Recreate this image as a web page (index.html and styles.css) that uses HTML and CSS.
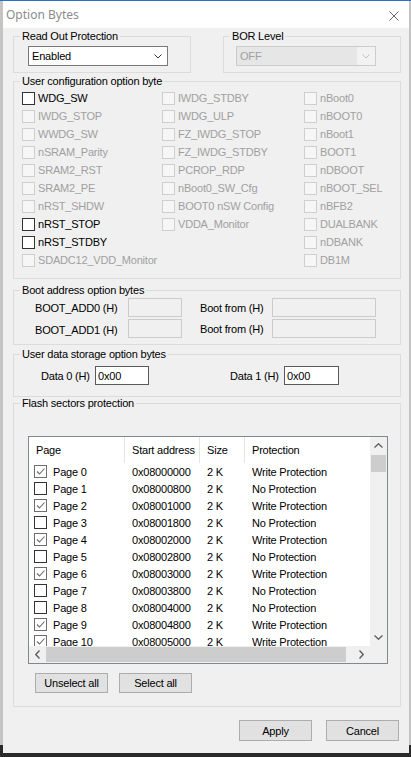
FILE: index.html
```html
<!DOCTYPE html>
<html lang="en">
  <head>
    <meta charset="UTF-8" />
    <meta name="viewport" content="width=device-width, initial-scale=1.0" />
    <title>Option Bytes</title>
    <link rel="stylesheet" href="styles.css">
  </head>
  <body>
    <div class="desktop">
      <div class="window">
        <div class="titlebar">
          <span class="title">Option Bytes</span>
          <svg class="close" width="10" height="10" viewBox="0 0 10 10">
            <path d="M0.5 0.5 L9.5 9.5 M9.5 0.5 L0.5 9.5" />
          </svg>
        </div>

        <div class="dialog">
          <div class="top-row">
            <fieldset class="group group-top">
              <legend>Read Out Protection</legend>
              <div class="group-body rop-body">
                <div class="combo">
                  <span class="combo-text">Enabled</span>
                  <span class="combo-btn">
                    <svg width="8" height="5" viewBox="0 0 8 5"><path d="M0.5 0.5 L4 4 L7.5 0.5" /></svg>
                  </span>
                </div>
              </div>
            </fieldset>
            <fieldset class="group group-top">
              <legend>BOR Level</legend>
              <div class="group-body bor-body">
                <div class="combo combo-off">
                  <span class="combo-text">OFF</span>
                  <span class="combo-btn">
                    <svg width="8" height="5" viewBox="0 0 8 5"><path d="M0.5 0.5 L4 4 L7.5 0.5" /></svg>
                  </span>
                </div>
              </div>
            </fieldset>
          </div>

          <fieldset class="group group-user">
            <legend>User configuration option byte</legend>
            <div class="group-body opt-grid">
              <div class="opt-col">
                <div class="opt"><span class="box"></span>WDG_SW</div>
                <div class="opt off"><span class="box"></span>IWDG_STOP</div>
                <div class="opt off"><span class="box"></span>WWDG_SW</div>
                <div class="opt off"><span class="box"></span>nSRAM_Parity</div>
                <div class="opt off"><span class="box"></span>SRAM2_RST</div>
                <div class="opt off"><span class="box"></span>SRAM2_PE</div>
                <div class="opt off"><span class="box"></span>nRST_SHDW</div>
                <div class="opt"><span class="box"></span>nRST_STOP</div>
                <div class="opt"><span class="box"></span>nRST_STDBY</div>
                <div class="opt off"><span class="box"></span>SDADC12_VDD_Monitor</div>
              </div>
              <div class="opt-col">
                <div class="opt off"><span class="box"></span>IWDG_STDBY</div>
                <div class="opt off"><span class="box"></span>IWDG_ULP</div>
                <div class="opt off"><span class="box"></span>FZ_IWDG_STOP</div>
                <div class="opt off"><span class="box"></span>FZ_IWDG_STDBY</div>
                <div class="opt off"><span class="box"></span>PCROP_RDP</div>
                <div class="opt off"><span class="box"></span>nBoot0_SW_Cfg</div>
                <div class="opt off"><span class="box"></span>BOOT0 nSW Config</div>
                <div class="opt off"><span class="box"></span>VDDA_Monitor</div>
              </div>
              <div class="opt-col">
                <div class="opt off"><span class="box"></span>nBoot0</div>
                <div class="opt off"><span class="box"></span>nBOOT0</div>
                <div class="opt off"><span class="box"></span>nBoot1</div>
                <div class="opt off"><span class="box"></span>BOOT1</div>
                <div class="opt off"><span class="box"></span>nDBOOT</div>
                <div class="opt off"><span class="box"></span>nBOOT_SEL</div>
                <div class="opt off"><span class="box"></span>nBFB2</div>
                <div class="opt off"><span class="box"></span>DUALBANK</div>
                <div class="opt off"><span class="box"></span>nDBANK</div>
                <div class="opt off"><span class="box"></span>DB1M</div>
              </div>
            </div>
          </fieldset>

          <fieldset class="group group-boot">
            <legend>Boot address option bytes</legend>
            <div class="group-body boot-grid">
              <span class="boot-label">BOOT_ADD0 (H)</span>
              <span class="field field-off"></span>
              <span class="boot-label from">Boot from (H)</span>
              <span class="field field-off"></span>
              <span class="boot-label second">BOOT_ADD1 (H)</span>
              <span class="field field-off"></span>
              <span class="boot-label from">Boot from (H)</span>
              <span class="field field-off"></span>
            </div>
          </fieldset>

          <fieldset class="group group-data">
            <legend>User data storage option bytes</legend>
            <div class="group-body data-row">
              <span class="data-label">Data 0 (H)</span>
              <span class="field">0x00</span>
              <span class="data-label data-second">Data 1 (H)</span>
              <span class="field field-wide">0x00</span>
            </div>
          </fieldset>

          <fieldset class="group group-flash">
            <legend>Flash sectors protection</legend>
            <div class="group-body flash-body">
              <div class="listview">
                <div class="list-main">
                  <div class="list-head">
                    <span>Page</span>
                    <span>Start address</span>
                    <span>Size</span>
                    <span>Protection</span>
                  </div>
                  <div class="list-row"><span class="page"><span class="box checked"><svg viewBox="0 0 11 11"><path d="M2 5.5 L4.5 8 L9.5 2.5" /></svg></span>Page 0</span><span>0x08000000</span><span>2 K</span><span>Write Protection</span></div>
                  <div class="list-row"><span class="page"><span class="box"></span>Page 1</span><span>0x08000800</span><span>2 K</span><span>No Protection</span></div>
                  <div class="list-row"><span class="page"><span class="box checked"><svg viewBox="0 0 11 11"><path d="M2 5.5 L4.5 8 L9.5 2.5" /></svg></span>Page 2</span><span>0x08001000</span><span>2 K</span><span>Write Protection</span></div>
                  <div class="list-row"><span class="page"><span class="box"></span>Page 3</span><span>0x08001800</span><span>2 K</span><span>No Protection</span></div>
                  <div class="list-row"><span class="page"><span class="box checked"><svg viewBox="0 0 11 11"><path d="M2 5.5 L4.5 8 L9.5 2.5" /></svg></span>Page 4</span><span>0x08002000</span><span>2 K</span><span>Write Protection</span></div>
                  <div class="list-row"><span class="page"><span class="box"></span>Page 5</span><span>0x08002800</span><span>2 K</span><span>No Protection</span></div>
                  <div class="list-row"><span class="page"><span class="box checked"><svg viewBox="0 0 11 11"><path d="M2 5.5 L4.5 8 L9.5 2.5" /></svg></span>Page 6</span><span>0x08003000</span><span>2 K</span><span>Write Protection</span></div>
                  <div class="list-row"><span class="page"><span class="box"></span>Page 7</span><span>0x08003800</span><span>2 K</span><span>No Protection</span></div>
                  <div class="list-row"><span class="page"><span class="box"></span>Page 8</span><span>0x08004000</span><span>2 K</span><span>No Protection</span></div>
                  <div class="list-row"><span class="page"><span class="box checked"><svg viewBox="0 0 11 11"><path d="M2 5.5 L4.5 8 L9.5 2.5" /></svg></span>Page 9</span><span>0x08004800</span><span>2 K</span><span>Write Protection</span></div>
                  <div class="list-row"><span class="page"><span class="box checked"><svg viewBox="0 0 11 11"><path d="M2 5.5 L4.5 8 L9.5 2.5" /></svg></span>Page 10</span><span>0x08005000</span><span>2 K</span><span>Write Protection</span></div>
                </div>
                <div class="vscroll">
                  <span class="arrow"><svg width="9" height="5" viewBox="0 0 9 5"><path d="M0.5 4.5 L4.5 0.8 L8.5 4.5" /></svg></span>
                  <span class="vthumb"></span>
                  <span class="track"></span>
                  <span class="arrow"><svg width="9" height="5" viewBox="0 0 9 5"><path d="M0.5 0.5 L4.5 4.2 L8.5 0.5" /></svg></span>
                </div>
                <div class="hscroll">
                  <span class="arrow"><svg width="5" height="9" viewBox="0 0 5 9"><path d="M4.5 0.5 L0.8 4.5 L4.5 8.5" /></svg></span>
                  <span class="hthumb"></span>
                  <span class="track"></span>
                  <span class="arrow"><svg width="5" height="9" viewBox="0 0 5 9"><path d="M0.5 0.5 L4.2 4.5 L0.5 8.5" /></svg></span>
                </div>
                <div class="corner"></div>
              </div>
              <div class="list-buttons">
                <button class="btn">Unselect all</button>
                <button class="btn">Select all</button>
              </div>
            </div>
          </fieldset>

          <div class="footer">
            <button class="btn btn-big">Apply</button>
            <button class="btn btn-big">Cancel</button>
          </div>
        </div>
      </div>
    </div>
  </body>
</html>
```
FILE: styles.css
```css
* {
  box-sizing: border-box;
}

body {
  margin: 0;
  background: linear-gradient(#c4c4c4 0, #c4c4c4 745px, #2b2b2b 745px);
  font-family: "Liberation Sans", Arial, sans-serif;
  font-size: 11px;
  letter-spacing: -0.2px;
  color: #000;
}

.desktop {
  height: 757px;
  border-top: 1px solid #2c6fc7;
}

.window {
  margin-left: 3px;
  width: 406px;
  height: 752px;
  background: #f0f0f0;
  display: flex;
  flex-direction: column;
}

.titlebar {
  height: 27px;
  flex: none;
  background: #fff;
  display: flex;
  align-items: center;
  justify-content: space-between;
  padding: 0 10px 0 3px;
}

.title {
  font-family: "Noto Sans", "Open Sans", sans-serif;
  font-size: 12px;
  letter-spacing: 0;
  color: #8c8c8c;
}

.close {
  margin-top: 2px;
}

.close path {
  stroke: #666;
  stroke-width: 1;
  fill: none;
}

.dialog {
  padding: 2px 8px 12px 10px;
  display: flex;
  flex-direction: column;
}

/* group boxes: padding lives on .group-body so legends stay put */
.group {
  margin: 0;
  padding: 0;
  min-width: 0;
  border: 1px solid #dcdcdc;
}

.group legend {
  margin-left: 6px;
  padding: 0 2px;
  line-height: 13px;
  font-size: 11px;
}

.top-row {
  display: flex;
  justify-content: space-between;
}

.group-top {
  width: 178px;
}

.rop-body {
  padding: 3px 0 6px 14px;
}

.bor-body {
  padding: 3px 0 6px 12px;
}

.combo {
  width: 140px;
  height: 20px;
  border: 1px solid #7a7a7a;
  background: #fff;
  display: flex;
  align-items: center;
}

.combo-text {
  flex: 1;
  padding-left: 3px;
}

.combo-btn {
  width: 18px;
  height: 100%;
  display: flex;
  align-items: center;
  justify-content: center;
}

.combo svg path {
  stroke: #333;
  stroke-width: 1;
  fill: none;
}

.combo-off {
  border-color: #cccccc;
  background: #e6e6e6;
  color: #a0a0a0;
}

.combo-off .combo-btn {
  background: #f2f2f2;
}

.combo-off svg path {
  stroke: #c0c0c0;
}

/* option byte checkboxes */
.group-user {
  margin-top: 2px;
}

.opt-grid {
  display: grid;
  grid-template-columns: 140px 142px 1fr;
  padding: 1px 0 9px 8px;
}

.opt-col {
  display: flex;
  flex-direction: column;
}

.opt {
  height: 18px;
  display: flex;
  align-items: center;
  gap: 3px;
  white-space: nowrap;
}

.box {
  width: 13px;
  height: 13px;
  flex: none;
  border: 1px solid #333;
  background: #fff;
}

.opt.off {
  color: #a0a0a0;
}

.opt.off .box {
  border-color: #cfcfcf;
  background: #f6f6f6;
}

/* boot address */
.group-boot {
  margin-top: 5px;
}

.boot-grid {
  display: grid;
  grid-template-columns: 93px 54px 90px 104px;
  grid-auto-rows: 19px;
  row-gap: 2px;
  align-items: center;
  padding: 1px 0 6px 21px;
}

.boot-label.from {
  padding-left: 18px;
}

.boot-label.second {
  padding-top: 3px;
}

.field {
  display: flex;
  align-items: center;
  height: 19px;
  padding-left: 2px;
  border: 1px solid #5a5a5a;
  background: #fff;
}

.field-off {
  border-color: #cccccc;
  background: #f0f0f0;
}

/* user data */
.group-data {
  margin-top: 3px;
}

.data-row {
  display: flex;
  align-items: center;
  padding: 5px 0 11px 27px;
}

.data-label {
  width: 54px;
}

.data-row .field {
  width: 54px;
}

.data-row .field-wide {
  width: 55px;
}

.data-second {
  margin-left: 81px;
}

/* flash sectors list */
.flash-body {
  padding: 26px 0 13px 14px;
}

.listview {
  width: 360px;
  height: 228px;
  border: 1px solid #828790;
  background: #fff;
  display: grid;
  grid-template-columns: 1fr 17px;
  grid-template-rows: 1fr 17px;
}

.list-main {
  overflow: hidden;
}

.list-head,
.list-row {
  display: grid;
  grid-template-columns: 95px 75px 45px 200px;
  white-space: nowrap;
}

.list-head {
  height: 26px;
  align-items: stretch;
}

.list-head span {
  display: flex;
  align-items: center;
  padding-left: 7px;
}

.list-head span + span {
  border-left: 1px solid #e5e5e5;
}

.list-row {
  height: 17px;
  align-items: center;
}

.list-row span {
  padding-left: 8px;
}

.list-row .page {
  display: flex;
  align-items: center;
  gap: 6px;
  padding-left: 5px;
}

.list-row .box {
  padding: 0;
  border-color: #333;
}

.list-row .box.checked {
  border-color: #6e6e6e;
}

.box svg {
  display: block;
  width: 11px;
  height: 11px;
}

.box svg path {
  stroke: #6a6a6a;
  stroke-width: 1.1;
  fill: none;
}

.vscroll,
.hscroll {
  background: #f0f0f0;
  display: flex;
}

.vscroll {
  flex-direction: column;
}

.arrow {
  width: 17px;
  height: 17px;
  flex: none;
  display: flex;
  align-items: center;
  justify-content: center;
}

.arrow path {
  stroke: #606060;
  stroke-width: 1.4;
  fill: none;
}

.track {
  flex: 1;
}

.vthumb {
  height: 17px;
  margin: 1px 1px 0;
  background: #cdcdcd;
}

.hthumb {
  width: 300px;
  margin: 1px 0;
  background: #cdcdcd;
}

.corner {
  background: #f0f0f0;
}

.list-buttons {
  display: flex;
  gap: 11px;
  margin-top: 9px;
  padding-left: 7px;
}

/* buttons */
.btn {
  width: 73px;
  height: 20px;
  padding: 0;
  border: 1px solid #adadad;
  background: #e1e1e1;
  font-family: inherit;
  font-size: 11px;
  letter-spacing: inherit;
  color: #000;
}

.btn-big {
  height: 21px;
}

.footer {
  display: flex;
  justify-content: flex-end;
  gap: 14px;
  margin-top: 13px;
  padding-right: 2px;
}
```
